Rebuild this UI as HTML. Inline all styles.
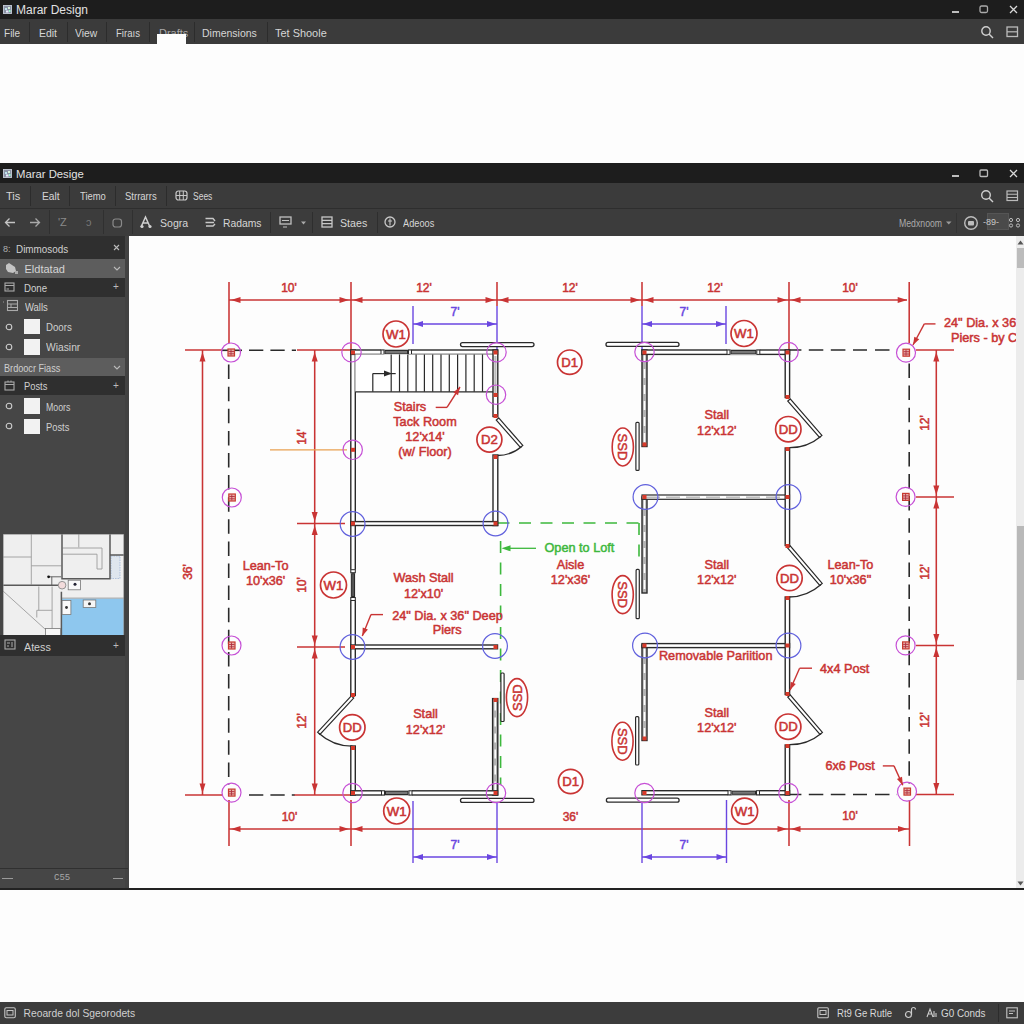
<!DOCTYPE html>
<html><head><meta charset="utf-8">
<style>
*{margin:0;padding:0;box-sizing:border-box}
html,body{width:1024px;height:1024px;overflow:hidden;background:#fdfdfd;font-family:"Liberation Sans",sans-serif}
.a{position:absolute}
.t{position:absolute;white-space:nowrap;color:#d6d6d6;font-size:11px;line-height:1}
.title{background:#1d1d1d}
.menu{background:#3b3b3b}
.tool{background:#3c3c3c}
.sep{position:absolute;width:1px;background:#2c2c2c}
.panel{background:#464646}
.drow{background:#2f2f2f}
.hrow{background:#5d5d5d}
</style></head><body>
<div class="a" style="left:0;top:1002px;width:1024px;height:22px;background:#3c3c3c"></div>
<!-- ===== top window ===== -->
<div class="a title" style="left:0;top:0;width:1024px;height:19px"></div>
<div class="a menu" style="left:0;top:19px;width:1024px;height:25px"></div>
<div class="a" style="left:0;top:44px;width:1024px;height:119px;background:#fdfdfd"></div>

<!-- title 1 -->
<svg class="a" style="left:3px;top:5px" width="9" height="9"><rect x="0" y="0" width="9" height="9" fill="#8b93a6"/><rect x="0.5" y="0.5" width="8" height="8" fill="none" stroke="#c8ccd6" stroke-width="0.8"/><rect x="2" y="3" width="2" height="2" fill="#bfe4ee"/><rect x="5" y="2" width="2" height="2" fill="#d8f0d8"/><rect x="3" y="5.5" width="2.5" height="2" fill="#eef"/><rect x="6" y="5" width="1.5" height="2" fill="#9fc"/></svg>
<div class="t" style="left:16px;top:4px;font-size:12px;color:#e2e2e2">Marar Design</div>
<div class="a" style="left:952px;top:11px;width:7px;height:2px;background:#bdbdbd"></div>
<svg class="a" style="left:979px;top:5px" width="10" height="9"><rect x="1" y="1" width="7.5" height="6.5" rx="1.5" fill="none" stroke="#aaa" stroke-width="1.3"/></svg>
<svg class="a" style="left:1009px;top:5px" width="9" height="9"><path d="M1 1L8 8M8 1L1 8" stroke="#d8d8d8" stroke-width="1.3"/></svg>
<!-- menu 1 -->
<div class="t" style="left:4px;top:27.8px;font-size:11px;transform:scaleX(0.913);transform-origin:0 0">File</div>
<div class="t" style="left:39px;top:27.8px;font-size:11px;transform:scaleX(0.949);transform-origin:0 0">Edit</div>
<div class="t" style="left:75px;top:27.8px;font-size:11px;transform:scaleX(0.938);transform-origin:0 0">View</div>
<div class="t" style="left:116px;top:27.8px;font-size:11px;transform:scaleX(0.873);transform-origin:0 0">Firaıs</div>
<div class="t" style="left:159px;top:27.8px;font-size:11px;color:#aaa">Drafts</div>
<div class="a" style="left:157px;top:34px;width:29px;height:10px;background:#fdfdfd"></div>
<div class="t" style="left:202px;top:27.8px;font-size:10.5px">Dimensions</div>
<div class="t" style="left:275px;top:27.8px;font-size:11px;transform:scaleX(0.995);transform-origin:0 0">Tet Shoole</div>
<div class="sep" style="left:29px;top:22px;height:20px"></div>
<div class="sep" style="left:67px;top:22px;height:20px"></div>
<div class="sep" style="left:106px;top:22px;height:20px"></div>
<div class="sep" style="left:149px;top:22px;height:20px"></div>
<div class="sep" style="left:194px;top:22px;height:20px"></div>
<div class="sep" style="left:267px;top:22px;height:20px"></div>
<svg class="a" style="left:980px;top:25px" width="14" height="14"><circle cx="6" cy="6" r="4.2" fill="none" stroke="#cfcfcf" stroke-width="1.4"/><path d="M9 9L13 13" stroke="#cfcfcf" stroke-width="1.5"/></svg>
<svg class="a" style="left:1006px;top:26px" width="13" height="12"><rect x="1" y="1" width="10.5" height="9.5" fill="none" stroke="#bbb" stroke-width="1.3"/><path d="M1 5.8H11.5" stroke="#bbb" stroke-width="1.2"/></svg>


<!-- ===== second window ===== -->
<div class="a title" style="left:0;top:163px;width:1024px;height:20px"></div>
<div class="a menu" style="left:0;top:183px;width:1024px;height:25px"></div>
<div class="a" style="left:0;top:208px;width:1024px;height:1px;background:#2e2e2e"></div>
<div class="a tool" style="left:0;top:209px;width:1024px;height:27px"></div>
<!-- title 2 -->
<svg class="a" style="left:3px;top:169px" width="9" height="9"><rect x="0" y="0" width="9" height="9" fill="#8b93a6"/><rect x="0.5" y="0.5" width="8" height="8" fill="none" stroke="#c8ccd6" stroke-width="0.8"/><rect x="2" y="3" width="2" height="2" fill="#bfe4ee"/><rect x="5" y="2" width="2" height="2" fill="#d8f0d8"/><rect x="3" y="5.5" width="2.5" height="2" fill="#eef"/><rect x="6" y="5" width="1.5" height="2" fill="#9fc"/></svg>
<div class="t" style="left:16px;top:168.5px;font-size:11.3px;color:#e2e2e2">Marar Desige</div>
<div class="a" style="left:952px;top:175px;width:7px;height:1.6px;background:#bdbdbd"></div>
<svg class="a" style="left:979px;top:169px" width="10" height="9"><rect x="1" y="1" width="7.5" height="6.5" rx="1" fill="none" stroke="#bbb" stroke-width="1.3"/></svg>
<svg class="a" style="left:1009px;top:169px" width="9" height="9"><path d="M1 1L8 8M8 1L1 8" stroke="#d8d8d8" stroke-width="1.3"/></svg>
<!-- menu 2 -->
<div class="t" style="left:6px;top:191px;font-size:11px">Tis</div>
<div class="t" style="left:41.5px;top:191px;font-size:11px;transform:scaleX(0.928);transform-origin:0 0">Ealt</div>
<div class="t" style="left:79.5px;top:191px;font-size:11px;transform:scaleX(0.856);transform-origin:0 0">Tiemo</div>
<div class="t" style="left:124.5px;top:191px;font-size:11px;transform:scaleX(0.864);transform-origin:0 0">Strrarrs</div>
<svg class="a" style="left:175px;top:190px" width="13" height="11"><rect x="1" y="1" width="11" height="9" rx="2.5" fill="none" stroke="#c8c8c8" stroke-width="1.2"/><path d="M4.7 1V10M8.3 1V10M1 5.5H12" stroke="#c8c8c8" stroke-width="1"/></svg>
<div class="t" style="left:192.5px;top:191.5px;font-size:10px;transform:scaleX(0.85);transform-origin:0 0">Sees</div>
<div class="sep" style="left:30px;top:186px;height:20px"></div>
<div class="sep" style="left:69px;top:186px;height:20px"></div>
<div class="sep" style="left:115px;top:186px;height:20px"></div>
<div class="sep" style="left:166px;top:186px;height:20px"></div>
<svg class="a" style="left:980px;top:189px" width="14" height="14"><circle cx="6" cy="6" r="4.3" fill="none" stroke="#cfcfcf" stroke-width="1.4"/><path d="M9 9L13 13" stroke="#cfcfcf" stroke-width="1.5"/></svg>
<svg class="a" style="left:1006px;top:190px" width="13" height="12"><rect x="1" y="1" width="10.5" height="9.5" fill="none" stroke="#bbb" stroke-width="1.2"/><path d="M1 4.3H11.5M1 7.5H11.5" stroke="#bbb" stroke-width="1.1"/></svg>
<!-- toolbar -->
<svg class="a" style="left:4px;top:217px" width="12" height="11"><path d="M11 5.5H1.5M5.5 1.5L1.5 5.5L5.5 9.5" fill="none" stroke="#c4c4c4" stroke-width="1.3"/></svg>
<svg class="a" style="left:29px;top:217px" width="12" height="11"><path d="M1 5.5H10.5M6.5 1.5L10.5 5.5L6.5 9.5" fill="none" stroke="#a8a8a8" stroke-width="1.3"/></svg>
<div class="sep" style="left:49px;top:210px;height:24px;background:#303030"></div>
<div class="t" style="left:58px;top:217px;font-size:11px;color:#8a8a8a">'Z</div>
<div class="t" style="left:86px;top:217px;font-size:11px;color:#7a7a7a">ɔ</div>
<div class="sep" style="left:103px;top:210px;height:24px;background:#303030"></div>
<svg class="a" style="left:112px;top:218px" width="11" height="10"><rect x="1" y="1" width="8.5" height="8" rx="2.5" fill="none" stroke="#8a8a8a" stroke-width="1.2"/></svg>
<div class="sep" style="left:132px;top:210px;height:24px;background:#303030"></div>
<svg class="a" style="left:139px;top:215px" width="14" height="14"><path d="M2 12L6.5 2L11 12M4 8H9" fill="none" stroke="#d0d0d0" stroke-width="1.5"/><circle cx="3" cy="11.5" r="1.6" fill="#d0d0d0"/><circle cx="11" cy="11.5" r="1.6" fill="#d0d0d0"/></svg>
<div class="t" style="left:159.5px;top:218px;font-size:11px;transform:scaleX(0.957);transform-origin:0 0">Sogra</div>
<svg class="a" style="left:204px;top:216px" width="13" height="13"><path d="M1.5 2.5H9L11 5M1.5 6.5H10M2 10H9L11 8" fill="none" stroke="#c8c8c8" stroke-width="1.4"/></svg>
<div class="t" style="left:222.5px;top:218px;font-size:11px;transform:scaleX(0.94);transform-origin:0 0">Radams</div>
<div class="sep" style="left:270px;top:212px;height:21px;background:#2e2e2e"></div>
<svg class="a" style="left:279px;top:216px" width="13" height="12"><rect x="1" y="1" width="11" height="7" fill="none" stroke="#c0c0c0" stroke-width="1.3"/><path d="M3 4.5H10M4 11H8" stroke="#c0c0c0" stroke-width="1.2"/></svg>
<svg class="a" style="left:301px;top:221px" width="5" height="4"><path d="M0 0.5H5L2.5 3.5Z" fill="#aaa"/></svg>
<div class="sep" style="left:312px;top:212px;height:21px;background:#2e2e2e"></div>
<svg class="a" style="left:321px;top:216px" width="12" height="12"><rect x="1" y="1" width="10" height="10" fill="none" stroke="#c8c8c8" stroke-width="1.3"/><path d="M1 4.3H11M1 7.6H11" stroke="#c8c8c8" stroke-width="1.2"/></svg>
<div class="t" style="left:339.5px;top:218px;font-size:11px;transform:scaleX(0.967);transform-origin:0 0">Staes</div>
<div class="sep" style="left:377px;top:212px;height:21px;background:#2e2e2e"></div>
<svg class="a" style="left:384px;top:216px" width="12" height="12"><circle cx="6" cy="6" r="5" fill="none" stroke="#c8c8c8" stroke-width="1.3"/><path d="M6 2.5V9.5M4 5H8" stroke="#c8c8c8" stroke-width="1.1"/></svg>
<div class="t" style="left:402.5px;top:218px;font-size:11px;transform:scaleX(0.838);transform-origin:0 0">Adeoos</div>
<div class="t" style="left:899px;top:218px;font-size:10.5px;color:#aaa;transform:scaleX(0.83);transform-origin:0 0">Medxnoom</div>
<svg class="a" style="left:946px;top:221px" width="6" height="4"><path d="M0 0.5H5.5L2.75 3.5Z" fill="#9a9a9a"/></svg>
<div class="sep" style="left:956px;top:213px;height:20px;background:#333"></div>
<svg class="a" style="left:963px;top:215px" width="16" height="16"><circle cx="8" cy="8" r="6.3" fill="none" stroke="#bdbdbd" stroke-width="1.4"/><rect x="5" y="6" width="6" height="4.5" rx="1" fill="#bdbdbd"/></svg>
<div class="a" style="left:987px;top:213px;width:22px;height:17px;background:#4a4a4a;border:1px solid #555"></div>
<div class="t" style="left:983px;top:218px;font-size:9px;color:#c8c8c8">-89-</div>
<svg class="a" style="left:1008px;top:217px" width="16" height="11"><circle cx="3" cy="3" r="1.6" fill="none" stroke="#bbb"/><circle cx="10" cy="3" r="1.6" fill="none" stroke="#bbb"/><circle cx="3" cy="8.5" r="1.6" fill="none" stroke="#bbb"/><circle cx="10" cy="8.5" r="1.6" fill="none" stroke="#bbb"/></svg>


<!-- left panel -->
<div class="a panel" style="left:0;top:236px;width:129px;height:653px"></div>
<div class="a" style="left:125px;top:236px;width:4px;height:653px;background:#424242"></div>


<!-- panel rows -->
<div class="a drow" style="left:0;top:236px;width:125px;height:23px"></div>
<div class="t" style="left:3px;top:245px;font-size:9px;color:#b0b0b0">8:</div>
<div class="t" style="left:16px;top:243.5px;font-size:11px;color:#cfcfcf;transform:scaleX(0.897);transform-origin:0 0">Dimmosods</div>
<svg class="a" style="left:113px;top:244px" width="7" height="7"><path d="M1 1L6 6M6 1L1 6" stroke="#bbb" stroke-width="1.1"/></svg>
<div class="a hrow" style="left:0;top:259px;width:125px;height:19px"></div>
<svg class="a" style="left:5px;top:262px" width="14" height="13"><path d="M1 3L4 1L7 3L10 5L11 9L8 11L3 10L1 7Z" fill="#c4c4c4"/><rect x="10" y="9" width="3" height="3" fill="#aaa"/></svg>
<div class="t" style="left:24.5px;top:264px;font-size:11px;color:#d4d4d4">Eldtatad</div>
<svg class="a" style="left:113px;top:266px" width="8" height="5"><path d="M1 1L4 4L7 1" fill="none" stroke="#bbb" stroke-width="1.1"/></svg>
<div class="a drow" style="left:0;top:278px;width:125px;height:19px"></div>
<svg class="a" style="left:4px;top:282px" width="11" height="10"><rect x="1" y="1" width="9" height="8" fill="none" stroke="#aaa" stroke-width="1.1"/><path d="M1 3.5H10M2.5 7H5" stroke="#aaa"/></svg>
<div class="t" style="left:24px;top:283px;font-size:11px;color:#cfcfcf;transform:scaleX(0.878);transform-origin:0 0">Done</div>
<div class="t" style="left:113px;top:282px;font-size:10px;color:#bbb">+</div>
<svg class="a" style="left:2px;top:299px" width="16" height="14"><path d="M1 3H2" stroke="#999"/><rect x="5.5" y="1.5" width="10" height="10" fill="none" stroke="#aaa" stroke-width="1.1"/><path d="M5.5 5H15.5M5.5 8.5H15.5M9 5V8.5" stroke="#aaa"/></svg>
<div class="t" style="left:24.5px;top:302px;font-size:11px;color:#d4d4d4;transform:scaleX(0.861);transform-origin:0 0">Walls</div>
<svg class="a" style="left:5px;top:323px" width="8" height="8"><circle cx="4" cy="4" r="2.8" fill="none" stroke="#ccc" stroke-width="1.1"/></svg>
<div class="a" style="left:24px;top:319px;width:16px;height:15px;background:#f2f2f2"></div>
<div class="t" style="left:45.5px;top:322px;font-size:11px;color:#cfcfcf;transform:scaleX(0.876);transform-origin:0 0">Doors</div>
<svg class="a" style="left:5px;top:343px" width="8" height="8"><circle cx="4" cy="4" r="2.8" fill="none" stroke="#ccc" stroke-width="1.1"/></svg>
<div class="a" style="left:24px;top:339px;width:16px;height:15.5px;background:#f2f2f2"></div>
<div class="t" style="left:45.5px;top:342px;font-size:11px;color:#cfcfcf;transform:scaleX(0.935);transform-origin:0 0">Wiasinr</div>
<div class="a hrow" style="left:0;top:357.5px;width:125px;height:18.5px"></div>
<div class="t" style="left:3.7px;top:362.5px;font-size:11px;color:#cfcfcf;transform:scaleX(0.83);transform-origin:0 0">Brdoocr Fiass</div>
<svg class="a" style="left:113px;top:365px" width="8" height="5"><path d="M1 1L4 4L7 1" fill="none" stroke="#bbb" stroke-width="1.1"/></svg>
<div class="a drow" style="left:0;top:376px;width:125px;height:18.5px"></div>
<svg class="a" style="left:4px;top:380px" width="11" height="11"><rect x="1" y="2" width="9" height="8" fill="none" stroke="#aaa" stroke-width="1.1"/><path d="M1 4.5H10M4 0.5V2M7 0.5V2" stroke="#aaa"/></svg>
<div class="t" style="left:23.5px;top:381px;font-size:11px;color:#cfcfcf;transform:scaleX(0.85);transform-origin:0 0">Posts</div>
<div class="t" style="left:113px;top:380.5px;font-size:10px;color:#bbb">+</div>
<svg class="a" style="left:5px;top:402px" width="8" height="8"><circle cx="4" cy="4" r="2.8" fill="none" stroke="#ccc" stroke-width="1.1"/></svg>
<div class="a" style="left:24px;top:398px;width:16px;height:16px;background:#f2f2f2"></div>
<div class="t" style="left:45.5px;top:401.5px;font-size:11px;color:#cfcfcf;transform:scaleX(0.798);transform-origin:0 0">Moors</div>
<svg class="a" style="left:5px;top:422px" width="8" height="8"><circle cx="4" cy="4" r="2.8" fill="none" stroke="#ccc" stroke-width="1.1"/></svg>
<div class="a" style="left:24px;top:418.5px;width:16px;height:15.5px;background:#f2f2f2"></div>
<div class="t" style="left:45.5px;top:422px;font-size:11px;color:#cfcfcf;transform:scaleX(0.85);transform-origin:0 0">Posts</div>
<!-- minimap -->
<svg class="a" style="left:2.5px;top:533.5px" width="121" height="102" viewBox="0 0 121 102">
<rect x="0" y="0" width="121" height="102" fill="#efefef"/>
<rect x="58.5" y="64.5" width="62.5" height="37.5" fill="#8ec7ee"/>
<rect x="108" y="22" width="9" height="22.5" fill="#dfe6ee" stroke="#8aa6d0" stroke-width="0.6" stroke-dasharray="1.5 1"/>
<g fill="none" stroke="#9c9c9c" stroke-width="0.9">
<path d="M28.3 0V50.5M0 23H28.3M28.3 31.8H58.5"/>
<path d="M75.8 0V13.4M59.5 14H99V35H94V20.2H59.5"/>
<path d="M0 57L42.5 95.5M35.8 52.5V76.3M33.8 76.3H49.1M49.1 52.5V94.5M33.8 76.3V83.5M58.5 64.1H121"/>
</g>
<g fill="none" stroke="#5a5a5a" stroke-width="1.5">
<path d="M59 0V44.8H107V0M107 21H121M0 51.3H55M58.4 57.8V102"/>
</g>
<path d="M45.6 42.8H58M48.8 42.8V51" stroke="#555" stroke-width="0.9"/><circle cx="45.6" cy="42.8" r="1.4" fill="#111"/>
<circle cx="59.1" cy="51.2" r="3.8" fill="#f3dcdc" stroke="#8a8a8a" stroke-width="0.9"/>
<rect x="65.2" y="46.2" width="12.3" height="9.6" fill="#fafafa" stroke="#777" stroke-width="0.8"/><circle cx="72" cy="50.3" r="1.5" fill="#223"/>
<rect x="80.2" y="66" width="12.6" height="7.5" fill="#f6f6f6" stroke="#777" stroke-width="0.8"/><circle cx="86.5" cy="69.8" r="1.5" fill="#333"/>
<rect x="59.1" y="66.5" width="8.8" height="14" fill="#fafafa" stroke="#777" stroke-width="0.8"/><circle cx="63.5" cy="73.5" r="1.4" fill="#333"/>
<rect x="42.5" y="94.5" width="15" height="7" fill="#f6f6f6" stroke="#777" stroke-width="0.8"/>
<rect x="0.3" y="0.3" width="120.4" height="101.4" fill="none" stroke="#8a8a8a" stroke-width="0.6"/>
</svg>
<div class="a drow" style="left:0;top:635px;width:125px;height:21px"></div>
<svg class="a" style="left:4px;top:639px" width="12" height="12"><rect x="1" y="1" width="10" height="9" fill="none" stroke="#aaa" stroke-width="1.1"/><path d="M3 4H6M3 7H5M8 3V8" stroke="#aaa"/></svg>
<div class="t" style="left:23.5px;top:642px;font-size:11px;color:#d0d0d0;transform:scaleX(0.974);transform-origin:0 0">Atess</div>
<div class="t" style="left:113px;top:641px;font-size:10px;color:#bbb">+</div>
<div class="a" style="left:0;top:867.5px;width:128px;height:1.2px;background:#303030"></div>
<div class="a" style="left:2px;top:878px;width:11px;height:1px;background:#9a9a9a"></div>
<div class="a" style="left:113px;top:878px;width:10px;height:1px;background:#9a9a9a"></div>
<div class="t" style="left:54px;top:874px;font-size:9px;color:#a8a8a8;font-family:'Liberation Mono',monospace">C55</div>
<!-- status -->
<svg class="a" style="left:4px;top:1007px" width="12" height="12"><rect x="0.8" y="0.8" width="10.5" height="10" rx="1.5" fill="none" stroke="#c4c4c4" stroke-width="1.1"/><rect x="3" y="3.5" width="6" height="4.5" fill="none" stroke="#c4c4c4"/></svg>
<div class="t" style="left:23.5px;top:1008.5px;font-size:10.3px;color:#d0d0d0">Reoarde dol Sgeorodets</div>
<svg class="a" style="left:817px;top:1007px" width="12" height="12"><rect x="0.8" y="0.8" width="10.5" height="10" rx="1" fill="none" stroke="#c4c4c4" stroke-width="1.1"/><rect x="3" y="3.5" width="6" height="4" fill="none" stroke="#c4c4c4"/></svg>
<div class="t" style="left:837px;top:1008px;font-size:10.5px;color:#d8d8d8;transform:scaleX(0.908);transform-origin:0 0">Rt9 Ge Rutle</div>
<svg class="a" style="left:904px;top:1006px" width="13" height="13"><circle cx="4.5" cy="8.5" r="3" fill="none" stroke="#ccc" stroke-width="1.2"/><path d="M7.5 8.5V3.5A2 2 0 0 1 11.5 3.5" fill="none" stroke="#ccc" stroke-width="1.2"/></svg>
<svg class="a" style="left:926px;top:1007px" width="12" height="12"><path d="M1 10L4 2L7 10M2.5 7H6M8 4V10M10 6V10" fill="none" stroke="#ccc" stroke-width="1.1"/></svg>
<div class="t" style="left:941px;top:1008px;font-size:10.5px;color:#d8d8d8;transform:scaleX(0.942);transform-origin:0 0">G0 Conds</div>
<div class="a" style="left:998px;top:1004px;width:1px;height:18px;background:#2c2c2c"></div>
<svg class="a" style="left:1006px;top:1007px" width="12" height="12"><rect x="0.8" y="0.8" width="10.5" height="10" fill="none" stroke="#c4c4c4" stroke-width="1.1"/><path d="M3 4H9M3 6.5H7" stroke="#c4c4c4"/></svg>

<!-- canvas -->
<div class="a" style="left:129px;top:236px;width:887px;height:652px;background:#fdfdfd;overflow:hidden">
<svg style="position:absolute;left:-129px;top:-236px" width="1024" height="1024" font-family="Liberation Sans, sans-serif">
<line x1="229" y1="282" x2="229" y2="343" stroke="#c93434" stroke-width="1.55"/>
<line x1="351" y1="282" x2="351" y2="350" stroke="#c93434" stroke-width="1.55"/>
<line x1="497" y1="282" x2="497" y2="306" stroke="#c93434" stroke-width="1.55"/>
<line x1="642" y1="282" x2="642" y2="306" stroke="#c93434" stroke-width="1.55"/>
<line x1="789" y1="282" x2="789" y2="350" stroke="#c93434" stroke-width="1.55"/>
<line x1="909.2" y1="282" x2="909.2" y2="343" stroke="#c93434" stroke-width="1.55"/>
<line x1="497" y1="306" x2="497" y2="350" stroke="#6a46e0" stroke-width="1.4"/>
<line x1="642" y1="306" x2="642" y2="350" stroke="#6a46e0" stroke-width="1.4"/>
<line x1="229" y1="300" x2="907" y2="300" stroke="#c93434" stroke-width="1.55"/>
<polygon points="231,300 240.5,297 240.5,303" fill="#c93434"/>
<polygon points="349,300 339.5,297 339.5,303" fill="#c93434"/>
<polygon points="353,300 362.5,297 362.5,303" fill="#c93434"/>
<polygon points="495,300 485.5,297 485.5,303" fill="#c93434"/>
<polygon points="499,300 508.5,297 508.5,303" fill="#c93434"/>
<polygon points="640,300 630.5,297 630.5,303" fill="#c93434"/>
<polygon points="644,300 653.5,297 653.5,303" fill="#c93434"/>
<polygon points="787,300 777.5,297 777.5,303" fill="#c93434"/>
<polygon points="791,300 800.5,297 800.5,303" fill="#c93434"/>
<polygon points="907.2,300 897.7,297 897.7,303" fill="#c93434"/>
<text x="289" y="291.5" fill="#c93434" stroke="#c93434" stroke-width="0.5" font-size="12" text-anchor="middle">10'</text>
<text x="424" y="291.5" fill="#c93434" stroke="#c93434" stroke-width="0.5" font-size="12" text-anchor="middle">12'</text>
<text x="570" y="291.5" fill="#c93434" stroke="#c93434" stroke-width="0.5" font-size="12" text-anchor="middle">12'</text>
<text x="715" y="291.5" fill="#c93434" stroke="#c93434" stroke-width="0.5" font-size="12" text-anchor="middle">12'</text>
<text x="850" y="291.5" fill="#c93434" stroke="#c93434" stroke-width="0.5" font-size="12" text-anchor="middle">10'</text>
<line x1="413" y1="306" x2="413" y2="344" stroke="#6a46e0" stroke-width="1.4"/>
<line x1="726" y1="306" x2="726" y2="344" stroke="#6a46e0" stroke-width="1.4"/>
<line x1="413" y1="324" x2="497" y2="324" stroke="#6a46e0" stroke-width="1.4"/>
<polygon points="414,324 423,321 423,327" fill="#6a46e0"/>
<polygon points="496,324 487,321 487,327" fill="#6a46e0"/>
<line x1="642" y1="324" x2="726" y2="324" stroke="#6a46e0" stroke-width="1.4"/>
<polygon points="643,324 652,321 652,327" fill="#6a46e0"/>
<polygon points="725,324 716,321 716,327" fill="#6a46e0"/>
<text x="455" y="315.5" fill="#6a46e0" stroke="#6a46e0" stroke-width="0.5" font-size="12" text-anchor="middle">7'</text>
<text x="684" y="315.5" fill="#6a46e0" stroke="#6a46e0" stroke-width="0.5" font-size="12" text-anchor="middle">7'</text>
<line x1="229" y1="800" x2="229" y2="846" stroke="#c93434" stroke-width="1.55"/>
<line x1="351" y1="800" x2="351" y2="846" stroke="#c93434" stroke-width="1.55"/>
<line x1="789" y1="800" x2="789" y2="846" stroke="#c93434" stroke-width="1.55"/>
<line x1="909.5" y1="800" x2="909.5" y2="846" stroke="#c93434" stroke-width="1.55"/>
<line x1="229" y1="829" x2="909.5" y2="829" stroke="#c93434" stroke-width="1.55"/>
<polygon points="231,829 240.5,826 240.5,832" fill="#c93434"/>
<polygon points="349,829 339.5,826 339.5,832" fill="#c93434"/>
<polygon points="353,829 362.5,826 362.5,832" fill="#c93434"/>
<polygon points="787,829 777.5,826 777.5,832" fill="#c93434"/>
<polygon points="791,829 800.5,826 800.5,832" fill="#c93434"/>
<polygon points="907.5,829 898.0,826 898.0,832" fill="#c93434"/>
<text x="289.5" y="820.5" fill="#c93434" stroke="#c93434" stroke-width="0.5" font-size="12" text-anchor="middle">10'</text>
<text x="570.5" y="820.5" fill="#c93434" stroke="#c93434" stroke-width="0.5" font-size="12" text-anchor="middle">36'</text>
<text x="850" y="819.5" fill="#c93434" stroke="#c93434" stroke-width="0.5" font-size="12" text-anchor="middle">10'</text>
<line x1="413" y1="801" x2="413" y2="863" stroke="#6a46e0" stroke-width="1.4"/>
<line x1="497" y1="800" x2="497" y2="863" stroke="#6a46e0" stroke-width="1.4"/>
<line x1="413" y1="857" x2="497" y2="857" stroke="#6a46e0" stroke-width="1.4"/>
<polygon points="414,857 423,854 423,860" fill="#6a46e0"/>
<polygon points="496,857 487,854 487,860" fill="#6a46e0"/>
<line x1="642" y1="800" x2="642" y2="863" stroke="#6a46e0" stroke-width="1.4"/>
<line x1="726.5" y1="800" x2="726.5" y2="863" stroke="#6a46e0" stroke-width="1.4"/>
<line x1="642" y1="857" x2="726.5" y2="857" stroke="#6a46e0" stroke-width="1.4"/>
<polygon points="643,857 652,854 652,860" fill="#6a46e0"/>
<polygon points="725.5,857 716.5,854 716.5,860" fill="#6a46e0"/>
<text x="455" y="849" fill="#6a46e0" stroke="#6a46e0" stroke-width="0.5" font-size="12" text-anchor="middle">7'</text>
<text x="684" y="849" fill="#6a46e0" stroke="#6a46e0" stroke-width="0.5" font-size="12" text-anchor="middle">7'</text>
<line x1="185" y1="350" x2="222" y2="350" stroke="#c93434" stroke-width="1.55"/>
<line x1="297" y1="350" x2="351" y2="350" stroke="#c93434" stroke-width="1.55"/>
<line x1="185" y1="795" x2="222" y2="795" stroke="#c93434" stroke-width="1.55"/>
<line x1="294" y1="795" x2="351" y2="795" stroke="#c93434" stroke-width="1.55"/>
<line x1="202.5" y1="350" x2="202.5" y2="795" stroke="#c93434" stroke-width="1.55"/>
<polygon points="202.5,352 199.5,361.5 205.5,361.5" fill="#c93434"/>
<polygon points="202.5,793 199.5,783.5 205.5,783.5" fill="#c93434"/>
<text x="189" y="572" fill="#c93434" stroke="#c93434" stroke-width="0.5" font-size="12" text-anchor="middle" transform="rotate(-90 189 572)" dominant-baseline="middle">36'</text>
<line x1="297" y1="523.5" x2="345" y2="523.5" stroke="#c93434" stroke-width="1.55"/>
<line x1="297" y1="647" x2="345" y2="647" stroke="#c93434" stroke-width="1.55"/>
<line x1="314.7" y1="350" x2="314.7" y2="795" stroke="#c93434" stroke-width="1.55"/>
<polygon points="314.7,352 311.7,361.5 317.7,361.5" fill="#c93434"/>
<polygon points="314.7,521.5 311.7,512.0 317.7,512.0" fill="#c93434"/>
<polygon points="314.7,525.5 311.7,535.0 317.7,535.0" fill="#c93434"/>
<polygon points="314.7,645 311.7,635.5 317.7,635.5" fill="#c93434"/>
<polygon points="314.7,649 311.7,658.5 317.7,658.5" fill="#c93434"/>
<polygon points="314.7,793 311.7,783.5 317.7,783.5" fill="#c93434"/>
<text x="303" y="437" fill="#c93434" stroke="#c93434" stroke-width="0.5" font-size="12" text-anchor="middle" transform="rotate(-90 303 437)" dominant-baseline="middle">14'</text>
<text x="303" y="585" fill="#c93434" stroke="#c93434" stroke-width="0.5" font-size="12" text-anchor="middle" transform="rotate(-90 303 585)" dominant-baseline="middle">10'</text>
<text x="303" y="721" fill="#c93434" stroke="#c93434" stroke-width="0.5" font-size="12" text-anchor="middle" transform="rotate(-90 303 721)" dominant-baseline="middle">12'</text>
<line x1="270" y1="449.8" x2="347" y2="449.8" stroke="#e8a050" stroke-width="1.3"/>
<line x1="916" y1="350" x2="954" y2="350" stroke="#c93434" stroke-width="1.55"/>
<line x1="916" y1="497" x2="954" y2="497" stroke="#c93434" stroke-width="1.55"/>
<line x1="916" y1="645.5" x2="954" y2="645.5" stroke="#c93434" stroke-width="1.55"/>
<line x1="916" y1="794.5" x2="954" y2="794.5" stroke="#c93434" stroke-width="1.55"/>
<line x1="936.3" y1="350" x2="936.3" y2="794.5" stroke="#c93434" stroke-width="1.55"/>
<polygon points="936.3,352 933.3,361.5 939.3,361.5" fill="#c93434"/>
<polygon points="936.3,495 933.3,485.5 939.3,485.5" fill="#c93434"/>
<polygon points="936.3,499 933.3,508.5 939.3,508.5" fill="#c93434"/>
<polygon points="936.3,643.5 933.3,634.0 939.3,634.0" fill="#c93434"/>
<polygon points="936.3,647.5 933.3,657.0 939.3,657.0" fill="#c93434"/>
<polygon points="936.3,792.5 933.3,783.0 939.3,783.0" fill="#c93434"/>
<text x="925.5" y="423" fill="#c93434" stroke="#c93434" stroke-width="0.5" font-size="12" text-anchor="middle" transform="rotate(-90 925.5 423)" dominant-baseline="middle">12'</text>
<text x="925.5" y="572" fill="#c93434" stroke="#c93434" stroke-width="0.5" font-size="12" text-anchor="middle" transform="rotate(-90 925.5 572)" dominant-baseline="middle">12'</text>
<text x="925.5" y="720" fill="#c93434" stroke="#c93434" stroke-width="0.5" font-size="12" text-anchor="middle" transform="rotate(-90 925.5 720)" dominant-baseline="middle">12'</text>
<line x1="228.7" y1="364.6" x2="228.7" y2="785" stroke="#2a2a2a" stroke-width="1.6" stroke-dasharray="14.5 7.6"/>
<line x1="249" y1="350.3" x2="296" y2="350.3" stroke="#2a2a2a" stroke-width="1.6" stroke-dasharray="14.3 7.1"/>
<line x1="249" y1="795" x2="294.5" y2="795" stroke="#2a2a2a" stroke-width="1.6" stroke-dasharray="14.3 7.1"/>
<line x1="909.2" y1="363.5" x2="909.2" y2="784" stroke="#2a2a2a" stroke-width="1.6" stroke-dasharray="14.5 7.6"/>
<line x1="790" y1="350" x2="896" y2="350" stroke="#2a2a2a" stroke-width="1.6" stroke-dasharray="11.4 7.4 14.5 7.5 14.6 7.6 14 8 14.5 7.3"/>
<line x1="790" y1="794.5" x2="897" y2="794.5" stroke="#2a2a2a" stroke-width="1.6" stroke-dasharray="11.4 7.4 14.5 7.5 14.6 7.6 14 8 14.5 7.3"/>
<line x1="222" y1="350.3" x2="242" y2="350.3" stroke="#2a2a2a" stroke-width="1.6"/>
<circle cx="231" cy="352.5" r="9.5" fill="none" stroke="#c650d6" stroke-width="1.2"/>
<rect x="228" y="349.0" width="6.5" height="7" fill="#e8b0a8" stroke="#c83a30" stroke-width="1.2"/>
<path d="M228.5 351.5H234M228.5 353.8H234M231 349.5V355.5" stroke="#b03040" stroke-width="0.9"/>
<circle cx="231.8" cy="497.5" r="9.5" fill="none" stroke="#c650d6" stroke-width="1.2"/>
<rect x="228.8" y="494.0" width="6.5" height="7" fill="#e8b0a8" stroke="#c83a30" stroke-width="1.2"/>
<path d="M229.3 496.5H234.8M229.3 498.8H234.8M231.8 494.5V500.5" stroke="#b03040" stroke-width="0.9"/>
<circle cx="231.5" cy="645.5" r="9.5" fill="none" stroke="#c650d6" stroke-width="1.2"/>
<rect x="228.5" y="642.0" width="6.5" height="7" fill="#e8b0a8" stroke="#c83a30" stroke-width="1.2"/>
<path d="M229.0 644.5H234.5M229.0 646.8H234.5M231.5 642.5V648.5" stroke="#b03040" stroke-width="0.9"/>
<circle cx="231.5" cy="792.6" r="9.5" fill="none" stroke="#c650d6" stroke-width="1.2"/>
<rect x="228.5" y="789.1" width="6.5" height="7" fill="#e8b0a8" stroke="#c83a30" stroke-width="1.2"/>
<path d="M229.0 791.6H234.5M229.0 793.9H234.5M231.5 789.6V795.6" stroke="#b03040" stroke-width="0.9"/>
<circle cx="906" cy="352.7" r="9.5" fill="none" stroke="#c650d6" stroke-width="1.2"/>
<rect x="903" y="349.2" width="6.5" height="7" fill="#e8b0a8" stroke="#c83a30" stroke-width="1.2"/>
<path d="M903.5 351.7H909M903.5 354.0H909M906 349.7V355.7" stroke="#b03040" stroke-width="0.9"/>
<circle cx="905.6" cy="496.9" r="9.5" fill="none" stroke="#c650d6" stroke-width="1.2"/>
<rect x="902.6" y="493.4" width="6.5" height="7" fill="#e8b0a8" stroke="#c83a30" stroke-width="1.2"/>
<path d="M903.1 495.9H908.6M903.1 498.2H908.6M905.6 493.9V499.9" stroke="#b03040" stroke-width="0.9"/>
<circle cx="905.6" cy="645.4" r="9.5" fill="none" stroke="#c650d6" stroke-width="1.2"/>
<rect x="902.6" y="641.9" width="6.5" height="7" fill="#e8b0a8" stroke="#c83a30" stroke-width="1.2"/>
<path d="M903.1 644.4H908.6M903.1 646.6999999999999H908.6M905.6 642.4V648.4" stroke="#b03040" stroke-width="0.9"/>
<circle cx="907" cy="791.6" r="9.5" fill="none" stroke="#c650d6" stroke-width="1.2"/>
<rect x="904" y="788.1" width="6.5" height="7" fill="#e8b0a8" stroke="#c83a30" stroke-width="1.2"/>
<path d="M904.5 790.6H910M904.5 792.9H910M907 788.6V794.6" stroke="#b03040" stroke-width="0.9"/>
<line x1="497.5" y1="523" x2="639" y2="523" stroke="#3db83d" stroke-width="1.6" stroke-dasharray="12 9.5"/>
<line x1="639" y1="523" x2="639" y2="562" stroke="#3db83d" stroke-width="1.6" stroke-dasharray="12 9.5"/>
<line x1="500.6" y1="541" x2="500.6" y2="785" stroke="#3db83d" stroke-width="1.6" stroke-dasharray="12 9.5"/>
<line x1="536" y1="548.3" x2="508" y2="548.3" stroke="#3db83d" stroke-width="1.3"/>
<polygon points="501.5,548.3 510.5,545.3 510.5,551.3" fill="#3db83d"/>
<text x="544.5" y="552" fill="#3db83d" stroke="#3db83d" stroke-width="0.5" font-size="12.7" text-anchor="start">Open to Loft</text>
<rect x="350.8" y="350" width="4.5" height="345.5" fill="#fff" stroke="#2a2a2a" stroke-width="1.4"/>
<rect x="350.8" y="746" width="4.5" height="49" fill="#fff" stroke="#2a2a2a" stroke-width="1.4"/>
<rect x="350.2" y="569.7" width="5.7" height="30.799999999999955" fill="#fff"/>
<rect x="350.8" y="569.7" width="4.5" height="3" fill="#fff" stroke="#2a2a2a" stroke-width="1"/>
<rect x="350.8" y="597.5" width="4.5" height="3" fill="#fff" stroke="#2a2a2a" stroke-width="1"/>
<rect x="351.6" y="573.7" width="2.9" height="22.799999999999955" fill="#555" stroke="#2a2a2a" stroke-width="1"/>
<rect x="350.8" y="350" width="146.7" height="4.399999999999977" fill="#fff" stroke="#2a2a2a" stroke-width="1.4"/>
<rect x="381" y="349.4" width="30.5" height="5.599999999999977" fill="#fff"/>
<rect x="381" y="350" width="3" height="4.399999999999977" fill="#fff" stroke="#2a2a2a" stroke-width="1"/>
<rect x="408.5" y="350" width="3" height="4.399999999999977" fill="#fff" stroke="#2a2a2a" stroke-width="1"/>
<rect x="385" y="350.5" width="22.5" height="3.3999999999999773" fill="#777" stroke="#2a2a2a" stroke-width="1"/>
<rect x="355.3" y="354.4" width="137.7" height="37.4" fill="#fff" stroke="none"/>
<line x1="355.3" y1="391.8" x2="493" y2="391.8" stroke="#2a2a2a" stroke-width="1.3"/>
<line x1="391.2" y1="354.4" x2="391.2" y2="391.8" stroke="#2a2a2a" stroke-width="1.2"/>
<line x1="399.5" y1="354.4" x2="399.5" y2="391.8" stroke="#2a2a2a" stroke-width="1.2"/>
<line x1="407.8" y1="354.4" x2="407.8" y2="391.8" stroke="#2a2a2a" stroke-width="1.2"/>
<line x1="416.09999999999997" y1="354.4" x2="416.09999999999997" y2="391.8" stroke="#2a2a2a" stroke-width="1.2"/>
<line x1="424.4" y1="354.4" x2="424.4" y2="391.8" stroke="#2a2a2a" stroke-width="1.2"/>
<line x1="432.7" y1="354.4" x2="432.7" y2="391.8" stroke="#2a2a2a" stroke-width="1.2"/>
<line x1="441.0" y1="354.4" x2="441.0" y2="391.8" stroke="#2a2a2a" stroke-width="1.2"/>
<line x1="449.3" y1="354.4" x2="449.3" y2="391.8" stroke="#2a2a2a" stroke-width="1.2"/>
<line x1="457.6" y1="354.4" x2="457.6" y2="391.8" stroke="#2a2a2a" stroke-width="1.2"/>
<line x1="465.9" y1="354.4" x2="465.9" y2="391.8" stroke="#2a2a2a" stroke-width="1.2"/>
<line x1="474.2" y1="354.4" x2="474.2" y2="391.8" stroke="#2a2a2a" stroke-width="1.2"/>
<line x1="482.5" y1="354.4" x2="482.5" y2="391.8" stroke="#2a2a2a" stroke-width="1.2"/>
<line x1="372.8" y1="391.8" x2="372.8" y2="373.6" stroke="#2a2a2a" stroke-width="1.2"/>
<line x1="372.8" y1="373.6" x2="395.7" y2="373.6" stroke="#2a2a2a" stroke-width="1.2"/>
<polygon points="392,373.6 384,370.6 384,376.6" fill="#2a2a2a"/>
<rect x="493" y="350" width="4.800000000000011" height="66.5" fill="#fff" stroke="#2a2a2a" stroke-width="1.4"/>
<rect x="494.3" y="356" width="2.2" height="37" fill="#bbb"/>
<rect x="493" y="455" width="4.800000000000011" height="70.5" fill="#fff" stroke="#2a2a2a" stroke-width="1.4"/>
<polygon points="496.29859746369016,420.0567080702579 520.3985974636902,447.4567080702579 522.8014025363099,445.34329192974207 498.70140253630984,417.9432919297421" fill="#fff" stroke="#2a2a2a" stroke-width="1.2"/>
<path d="M521.6 446.4A36.490683742566404 36.490683742566404 0 0 1 497.5 455.5" fill="none" stroke="#2a2a2a" stroke-width="1.3"/>
<rect x="350.8" y="521.6" width="146.7" height="3.8999999999999773" fill="#fff" stroke="#2a2a2a" stroke-width="1.4"/>
<rect x="350.8" y="645" width="146.7" height="3.7999999999999545" fill="#fff" stroke="#2a2a2a" stroke-width="1.4"/>
<rect x="492.6" y="698.6" width="5.199999999999989" height="96.39999999999998" fill="#b4b4b4" stroke="#2a2a2a" stroke-width="1.4"/>
<line x1="495.20000000000005" y1="701.6" x2="495.20000000000005" y2="792" stroke="#fff" stroke-width="1.6" stroke-dasharray="9 7"/>
<rect x="500.9" y="673" width="3.2" height="48.5" rx="1" fill="#fff" stroke="#2a2a2a" stroke-width="1.2"/>
<rect x="350.8" y="790.8" width="146.7" height="4.2000000000000455" fill="#fff" stroke="#2a2a2a" stroke-width="1.4"/>
<rect x="381.5" y="790.1999999999999" width="30.5" height="5.400000000000046" fill="#fff"/>
<rect x="381.5" y="790.8" width="3" height="4.2000000000000455" fill="#fff" stroke="#2a2a2a" stroke-width="1"/>
<rect x="409" y="790.8" width="3" height="4.2000000000000455" fill="#fff" stroke="#2a2a2a" stroke-width="1"/>
<rect x="385.5" y="791.3" width="22.5" height="3.2000000000000455" fill="#777" stroke="#2a2a2a" stroke-width="1"/>
<rect x="460.5" y="342.6" width="73.5" height="4" rx="2" fill="#fff" stroke="#2a2a2a" stroke-width="1.3"/>
<rect x="460.5" y="798.4" width="73.5" height="4" rx="2" fill="#fff" stroke="#2a2a2a" stroke-width="1.3"/>
<rect x="642" y="350" width="5" height="96.5" fill="#b4b4b4" stroke="#2a2a2a" stroke-width="1.4"/>
<line x1="644.5" y1="353" x2="644.5" y2="443.5" stroke="#fff" stroke-width="1.6" stroke-dasharray="9 7"/>
<rect x="642" y="497" width="5" height="96" fill="#b4b4b4" stroke="#2a2a2a" stroke-width="1.4"/>
<line x1="644.5" y1="500" x2="644.5" y2="590" stroke="#fff" stroke-width="1.6" stroke-dasharray="9 7"/>
<rect x="642" y="645" width="5" height="95.5" fill="#b4b4b4" stroke="#2a2a2a" stroke-width="1.4"/>
<line x1="644.5" y1="648" x2="644.5" y2="737.5" stroke="#fff" stroke-width="1.6" stroke-dasharray="9 7"/>
<rect x="635.9" y="422.3" width="3.2" height="48.099999999999966" rx="1" fill="#fff" stroke="#2a2a2a" stroke-width="1.2"/>
<rect x="636.1" y="569.4" width="3.2" height="49.30000000000007" rx="1" fill="#fff" stroke="#2a2a2a" stroke-width="1.2"/>
<rect x="635.6" y="716.6" width="3.2" height="48.39999999999998" rx="1" fill="#fff" stroke="#2a2a2a" stroke-width="1.2"/>
<rect x="642" y="350" width="147.5" height="4.399999999999977" fill="#fff" stroke="#2a2a2a" stroke-width="1.4"/>
<rect x="727" y="349.4" width="32.799999999999955" height="5.599999999999977" fill="#fff"/>
<rect x="727" y="350" width="3" height="4.399999999999977" fill="#fff" stroke="#2a2a2a" stroke-width="1"/>
<rect x="756.8" y="350" width="3" height="4.399999999999977" fill="#fff" stroke="#2a2a2a" stroke-width="1"/>
<rect x="731" y="350.5" width="24.799999999999955" height="3.3999999999999773" fill="#777" stroke="#2a2a2a" stroke-width="1"/>
<rect x="642" y="495" width="147.5" height="4.300000000000011" fill="#fff" stroke="#2a2a2a" stroke-width="1.2"/>
<line x1="646" y1="497.15" x2="785.5" y2="497.15" stroke="#9a9a9a" stroke-width="1" stroke-dasharray="14 6"/>
<rect x="642" y="643.6" width="147.5" height="4.0" fill="#fff" stroke="#2a2a2a" stroke-width="1.4"/>
<rect x="642" y="790.7" width="147.5" height="4.099999999999909" fill="#fff" stroke="#2a2a2a" stroke-width="1.4"/>
<rect x="728" y="790.1" width="31.5" height="5.299999999999909" fill="#fff"/>
<rect x="728" y="790.7" width="3" height="4.099999999999909" fill="#fff" stroke="#2a2a2a" stroke-width="1"/>
<rect x="756.5" y="790.7" width="3" height="4.099999999999909" fill="#fff" stroke="#2a2a2a" stroke-width="1"/>
<rect x="732" y="791.2" width="23.5" height="3.099999999999909" fill="#777" stroke="#2a2a2a" stroke-width="1"/>
<rect x="606" y="342.4" width="73" height="4" rx="2" fill="#fff" stroke="#2a2a2a" stroke-width="1.3"/>
<rect x="606.4" y="798.2" width="72.70000000000005" height="4" rx="2" fill="#fff" stroke="#2a2a2a" stroke-width="1.3"/>
<rect x="785.2" y="350" width="4.399999999999977" height="47.5" fill="#fff" stroke="#2a2a2a" stroke-width="1.4"/>
<rect x="785.2" y="448" width="4.399999999999977" height="97.5" fill="#fff" stroke="#2a2a2a" stroke-width="1.4"/>
<rect x="785.2" y="597" width="4.399999999999977" height="97.5" fill="#fff" stroke="#2a2a2a" stroke-width="1.4"/>
<rect x="785.2" y="745" width="4.399999999999977" height="50" fill="#fff" stroke="#2a2a2a" stroke-width="1.4"/>
<polygon points="787.7934164899328,401.05078838651457 819.4934164899329,437.45078838651455 821.9065835100672,435.3492116134854 790.2065835100672,398.94921161348543" fill="#fff" stroke="#2a2a2a" stroke-width="1.2"/>
<path d="M820.7 436.4A48.268519761848935 48.268519761848935 0 0 1 789 447.7" fill="none" stroke="#2a2a2a" stroke-width="1.3"/>
<polygon points="787.7842720890153,548.040195004051 819.7842720890153,585.440195004051 822.2157279109847,583.3598049959489 790.2157279109847,545.959804995949" fill="#fff" stroke="#2a2a2a" stroke-width="1.2"/>
<path d="M821 584.4A49.22154000028848 49.22154000028848 0 0 1 789 597" fill="none" stroke="#2a2a2a" stroke-width="1.3"/>
<polygon points="787.787480861786,697.0439335895853 819.987480861786,734.4439335895853 822.4125191382141,732.3560664104147 790.212519138214,694.9560664104147" fill="#fff" stroke="#2a2a2a" stroke-width="1.2"/>
<path d="M821.2 733.4A49.3517983461596 49.3517983461596 0 0 1 789 744.7" fill="none" stroke="#2a2a2a" stroke-width="1.3"/>
<polygon points="351.32741536956377,695.9114021475013 317.6274153695638,732.2114021475013 319.97258463043624,734.3885978524986 353.67258463043623,698.0885978524987" fill="#fff" stroke="#2a2a2a" stroke-width="1.2"/>
<path d="M318.8 733.3A49.5316060712753 49.5316060712753 0 0 0 352.5 746.2" fill="none" stroke="#2a2a2a" stroke-width="1.3"/>
<circle cx="352.6" cy="524" r="12.4" fill="none" stroke="#6060dd" stroke-width="1.2"/>
<circle cx="495.5" cy="523.5" r="12.4" fill="none" stroke="#6060dd" stroke-width="1.2"/>
<circle cx="352.5" cy="647" r="12.4" fill="none" stroke="#6060dd" stroke-width="1.2"/>
<circle cx="495" cy="646" r="12.4" fill="none" stroke="#6060dd" stroke-width="1.2"/>
<circle cx="645.5" cy="497" r="12.4" fill="none" stroke="#6060dd" stroke-width="1.2"/>
<circle cx="788.5" cy="497" r="12.4" fill="none" stroke="#6060dd" stroke-width="1.2"/>
<circle cx="645" cy="645.5" r="12.4" fill="none" stroke="#6060dd" stroke-width="1.2"/>
<circle cx="788.5" cy="645.5" r="12.4" fill="none" stroke="#6060dd" stroke-width="1.2"/>
<circle cx="351.5" cy="352.3" r="9.7" fill="none" stroke="#c650d6" stroke-width="1.2"/>
<circle cx="496.5" cy="352.3" r="9.7" fill="none" stroke="#c650d6" stroke-width="1.2"/>
<circle cx="496" cy="394.7" r="9.7" fill="none" stroke="#c650d6" stroke-width="1.2"/>
<circle cx="352.7" cy="449.8" r="9.7" fill="none" stroke="#c650d6" stroke-width="1.2"/>
<circle cx="644.5" cy="352" r="9.7" fill="none" stroke="#c650d6" stroke-width="1.2"/>
<circle cx="788.5" cy="352" r="9.7" fill="none" stroke="#c650d6" stroke-width="1.2"/>
<circle cx="352.5" cy="793" r="9.7" fill="none" stroke="#c650d6" stroke-width="1.2"/>
<circle cx="496" cy="793" r="9.7" fill="none" stroke="#c650d6" stroke-width="1.2"/>
<circle cx="644.5" cy="793" r="9.7" fill="none" stroke="#c650d6" stroke-width="1.2"/>
<circle cx="788.5" cy="793" r="9.7" fill="none" stroke="#c650d6" stroke-width="1.2"/>
<rect x="351.0" y="350.5" width="4" height="4" fill="#d83a2a"/>
<rect x="493.5" y="350.5" width="4" height="4" fill="#d83a2a"/>
<rect x="493.5" y="393.0" width="4" height="4" fill="#d83a2a"/>
<rect x="493.5" y="414.0" width="4" height="4" fill="#d83a2a"/>
<rect x="493.5" y="455.0" width="4" height="4" fill="#d83a2a"/>
<rect x="351.0" y="447.8" width="4" height="4" fill="#d83a2a"/>
<rect x="351.0" y="521.5" width="4" height="4" fill="#d83a2a"/>
<rect x="493.5" y="521.5" width="4" height="4" fill="#d83a2a"/>
<rect x="351.0" y="645.0" width="4" height="4" fill="#d83a2a"/>
<rect x="493.5" y="645.0" width="4" height="4" fill="#d83a2a"/>
<rect x="351.0" y="693.0" width="4" height="4" fill="#d83a2a"/>
<rect x="351.0" y="746.0" width="4" height="4" fill="#d83a2a"/>
<rect x="351.0" y="791.0" width="4" height="4" fill="#d83a2a"/>
<rect x="493.5" y="698.0" width="4" height="4" fill="#d83a2a"/>
<rect x="493.5" y="791.0" width="4" height="4" fill="#d83a2a"/>
<rect x="642.5" y="350.5" width="4" height="4" fill="#d83a2a"/>
<rect x="642.5" y="442.5" width="4" height="4" fill="#d83a2a"/>
<rect x="642.5" y="495.0" width="4" height="4" fill="#d83a2a"/>
<rect x="642.5" y="643.5" width="4" height="4" fill="#d83a2a"/>
<rect x="642.5" y="736.5" width="4" height="4" fill="#d83a2a"/>
<rect x="642.5" y="791.0" width="4" height="4" fill="#d83a2a"/>
<rect x="785.5" y="350.5" width="4" height="4" fill="#d83a2a"/>
<rect x="785.5" y="395.0" width="4" height="4" fill="#d83a2a"/>
<rect x="785.5" y="447.0" width="4" height="4" fill="#d83a2a"/>
<rect x="785.5" y="495.0" width="4" height="4" fill="#d83a2a"/>
<rect x="785.5" y="544.0" width="4" height="4" fill="#d83a2a"/>
<rect x="785.5" y="596.0" width="4" height="4" fill="#d83a2a"/>
<rect x="785.5" y="643.5" width="4" height="4" fill="#d83a2a"/>
<rect x="785.5" y="692.0" width="4" height="4" fill="#d83a2a"/>
<rect x="785.5" y="744.0" width="4" height="4" fill="#d83a2a"/>
<rect x="785.5" y="791.0" width="4" height="4" fill="#d83a2a"/>
<circle cx="396" cy="334" r="13" fill="#fff" stroke="#c93434" stroke-width="1.7"/>
<text x="396" y="338.7" fill="#c93434" stroke="#c93434" stroke-width="0.55" font-size="13.2" text-anchor="middle">W1</text>
<circle cx="744" cy="333.5" r="13" fill="#fff" stroke="#c93434" stroke-width="1.7"/>
<text x="744" y="338.2" fill="#c93434" stroke="#c93434" stroke-width="0.55" font-size="13.2" text-anchor="middle">W1</text>
<circle cx="333.5" cy="585" r="13" fill="#fff" stroke="#c93434" stroke-width="1.7"/>
<text x="333.5" y="589.7" fill="#c93434" stroke="#c93434" stroke-width="0.55" font-size="13.2" text-anchor="middle">W1</text>
<circle cx="396.7" cy="811" r="13" fill="#fff" stroke="#c93434" stroke-width="1.7"/>
<text x="396.7" y="815.7" fill="#c93434" stroke="#c93434" stroke-width="0.55" font-size="13.2" text-anchor="middle">W1</text>
<circle cx="744.6" cy="811.2" r="13" fill="#fff" stroke="#c93434" stroke-width="1.7"/>
<text x="744.6" y="815.9000000000001" fill="#c93434" stroke="#c93434" stroke-width="0.55" font-size="13.2" text-anchor="middle">W1</text>
<circle cx="569.7" cy="362.2" r="12.2" fill="#fff" stroke="#c93434" stroke-width="1.7"/>
<text x="569.7" y="366.9" fill="#c93434" stroke="#c93434" stroke-width="0.55" font-size="13.2" text-anchor="middle">D1</text>
<circle cx="570.6" cy="781.5" r="12.2" fill="#fff" stroke="#c93434" stroke-width="1.7"/>
<text x="570.6" y="786.2" fill="#c93434" stroke="#c93434" stroke-width="0.55" font-size="13.2" text-anchor="middle">D1</text>
<circle cx="489.4" cy="439.6" r="12.5" fill="#fff" stroke="#c93434" stroke-width="1.7"/>
<text x="489.4" y="444.3" fill="#c93434" stroke="#c93434" stroke-width="0.55" font-size="13.2" text-anchor="middle">D2</text>
<circle cx="788.3" cy="429.2" r="12.7" fill="#fff" stroke="#c93434" stroke-width="1.7"/>
<text x="788.3" y="433.9" fill="#c93434" stroke="#c93434" stroke-width="0.55" font-size="13.2" text-anchor="middle">DD</text>
<circle cx="789.5" cy="578" r="12.7" fill="#fff" stroke="#c93434" stroke-width="1.7"/>
<text x="789.5" y="582.7" fill="#c93434" stroke="#c93434" stroke-width="0.55" font-size="13.2" text-anchor="middle">DD</text>
<circle cx="788.2" cy="726.7" r="12.7" fill="#fff" stroke="#c93434" stroke-width="1.7"/>
<text x="788.2" y="731.4000000000001" fill="#c93434" stroke="#c93434" stroke-width="0.55" font-size="13.2" text-anchor="middle">DD</text>
<circle cx="352.3" cy="727.4" r="12.7" fill="#fff" stroke="#c93434" stroke-width="1.7"/>
<text x="352.3" y="732.1" fill="#c93434" stroke="#c93434" stroke-width="0.55" font-size="13.2" text-anchor="middle">DD</text>
<ellipse cx="622.8" cy="447" rx="10.6" ry="19" fill="#fff" stroke="#c93434" stroke-width="1.6"/>
<text x="622.8" y="451.7" fill="#c93434" font-size="13" text-anchor="middle" stroke="#c93434" stroke-width="0.5" transform="rotate(90 622.8 447)">SSD</text>
<ellipse cx="622.7" cy="594.6" rx="10.6" ry="19" fill="#fff" stroke="#c93434" stroke-width="1.6"/>
<text x="622.7" y="599.3000000000001" fill="#c93434" font-size="13" text-anchor="middle" stroke="#c93434" stroke-width="0.5" transform="rotate(90 622.7 594.6)">SSD</text>
<ellipse cx="622.5" cy="741.3" rx="10.6" ry="19" fill="#fff" stroke="#c93434" stroke-width="1.6"/>
<text x="622.5" y="746.0" fill="#c93434" font-size="13" text-anchor="middle" stroke="#c93434" stroke-width="0.5" transform="rotate(90 622.5 741.3)">SSD</text>
<ellipse cx="517" cy="697.6" rx="10.6" ry="19" fill="#fff" stroke="#c93434" stroke-width="1.6"/>
<text x="517" y="702.3000000000001" fill="#c93434" font-size="13" text-anchor="middle" stroke="#c93434" stroke-width="0.5" transform="rotate(-90 517 697.6)">SSD</text>
<text x="410" y="411.3" fill="#c93434" stroke="#c93434" stroke-width="0.5" font-size="12.7" text-anchor="middle">Stairs</text>
<line x1="435.7" y1="407.4" x2="447" y2="407.4" stroke="#c93434" stroke-width="1.4"/>
<line x1="447" y1="407.4" x2="460" y2="387" stroke="#c93434" stroke-width="1.4"/>
<polygon points="460,387 458.0620155528813,395.2513160333807 453.33941864079003,392.2418180011657" fill="#c93434"/>
<text x="425" y="425.5" fill="#c93434" stroke="#c93434" stroke-width="0.5" font-size="12.7" text-anchor="middle">Tack Room</text>
<text x="425" y="441" fill="#c93434" stroke="#c93434" stroke-width="0.5" font-size="12.7" text-anchor="middle">12'x14'</text>
<text x="425" y="456" fill="#c93434" stroke="#c93434" stroke-width="0.5" font-size="12.7" text-anchor="middle">(w/ Floor)</text>
<text x="265.6" y="570.1" fill="#c93434" stroke="#c93434" stroke-width="0.5" font-size="12.7" text-anchor="middle">Lean-To</text>
<text x="265.6" y="585" fill="#c93434" stroke="#c93434" stroke-width="0.5" font-size="12.7" text-anchor="middle">10'x36'</text>
<text x="423.6" y="582" fill="#c93434" stroke="#c93434" stroke-width="0.5" font-size="12.7" text-anchor="middle">Wash Stall</text>
<text x="423.6" y="597.7" fill="#c93434" stroke="#c93434" stroke-width="0.5" font-size="12.7" text-anchor="middle">12'x10'</text>
<text x="392.2" y="620.2" fill="#c93434" stroke="#c93434" stroke-width="0.5" font-size="12.7" text-anchor="start">24" Dia. x 36" Deep</text>
<text x="447.2" y="634.3" fill="#c93434" stroke="#c93434" stroke-width="0.5" font-size="12.7" text-anchor="middle">Piers</text>
<line x1="383" y1="614.6" x2="371" y2="614.6" stroke="#c93434" stroke-width="1.4"/>
<line x1="371" y1="614.6" x2="362.3" y2="635.9" stroke="#c93434" stroke-width="1.4"/>
<polygon points="362.3,635.9 362.73288802654105,627.435213649685 367.9171133082496,629.5527141168618" fill="#c93434"/>
<text x="570.5" y="569" fill="#c93434" stroke="#c93434" stroke-width="0.5" font-size="12.7" text-anchor="middle">Aisle</text>
<text x="570.5" y="584" fill="#c93434" stroke="#c93434" stroke-width="0.5" font-size="12.7" text-anchor="middle">12'x36'</text>
<text x="425.5" y="717.6" fill="#c93434" stroke="#c93434" stroke-width="0.5" font-size="12.7" text-anchor="middle">Stall</text>
<text x="425.5" y="734" fill="#c93434" stroke="#c93434" stroke-width="0.5" font-size="12.7" text-anchor="middle">12'x12'</text>
<text x="716.8" y="419.4" fill="#c93434" stroke="#c93434" stroke-width="0.5" font-size="12.7" text-anchor="middle">Stall</text>
<text x="716.8" y="435" fill="#c93434" stroke="#c93434" stroke-width="0.5" font-size="12.7" text-anchor="middle">12'x12'</text>
<text x="716.8" y="568.5" fill="#c93434" stroke="#c93434" stroke-width="0.5" font-size="12.7" text-anchor="middle">Stall</text>
<text x="716.8" y="584" fill="#c93434" stroke="#c93434" stroke-width="0.5" font-size="12.7" text-anchor="middle">12'x12'</text>
<text x="716.8" y="717" fill="#c93434" stroke="#c93434" stroke-width="0.5" font-size="12.7" text-anchor="middle">Stall</text>
<text x="716.8" y="732.3" fill="#c93434" stroke="#c93434" stroke-width="0.5" font-size="12.7" text-anchor="middle">12'x12'</text>
<text x="715.7" y="660.4" fill="#c93434" stroke="#c93434" stroke-width="0.5" font-size="12.7" text-anchor="middle">Removable Pariition</text>
<text x="850.4" y="569.2" fill="#c93434" stroke="#c93434" stroke-width="0.5" font-size="12.7" text-anchor="middle">Lean-To</text>
<text x="850.4" y="584.4" fill="#c93434" stroke="#c93434" stroke-width="0.5" font-size="12.7" text-anchor="middle">10'x36"</text>
<text x="820" y="673.4" fill="#c93434" stroke="#c93434" stroke-width="0.5" font-size="12.7" text-anchor="start">4x4 Post</text>
<line x1="812" y1="668.2" x2="799.6" y2="668.2" stroke="#c93434" stroke-width="1.4"/>
<line x1="799.6" y1="668.2" x2="790" y2="690.1" stroke="#c93434" stroke-width="1.4"/>
<polygon points="790,690.1 790.6473814842002,681.648911477572 795.7762487466239,683.8971820583604" fill="#c93434"/>
<text x="825.4" y="770.1" fill="#c93434" stroke="#c93434" stroke-width="0.5" font-size="12.7" text-anchor="start">6x6 Post</text>
<line x1="882.8" y1="765.9" x2="894" y2="765.9" stroke="#c93434" stroke-width="1.4"/>
<line x1="894" y1="765.9" x2="902.8" y2="785.2" stroke="#c93434" stroke-width="1.4"/>
<polygon points="902.8,785.2 896.9333858333174,779.0825791203091 902.0287222133805,776.7593169366534" fill="#c93434"/>
<text x="944" y="327" fill="#c93434" stroke="#c93434" stroke-width="0.5" font-size="12.7" text-anchor="start">24" Dia. x 36"</text>
<text x="951" y="342.2" fill="#c93434" stroke="#c93434" stroke-width="0.5" font-size="12.7" text-anchor="start">Piers - by C</text>
<line x1="935.5" y1="323.9" x2="924.3" y2="323.9" stroke="#c93434" stroke-width="1.4"/>
<line x1="924.3" y1="323.9" x2="913" y2="345" stroke="#c93434" stroke-width="1.4"/>
<polygon points="913,345 914.3085259575311,336.6257681057623 919.2451615623162,339.26955873770885" fill="#c93434"/>
</svg>
</div>
<!-- scrollbar -->
<div class="a" style="left:1016px;top:236px;width:8px;height:652px;background:#ececec"></div>
<svg class="a" style="left:1017px;top:240px" width="7" height="5"><path d="M0.5 4.5H6.5L3.5 0.5Z" fill="#555"/></svg>
<div class="a" style="left:1016.5px;top:248px;width:7.5px;height:19.5px;background:#bcbcbc"></div>
<div class="a" style="left:1016.5px;top:526px;width:7.5px;height:153.5px;background:#b9b9b9"></div>
<svg class="a" style="left:1017px;top:881px" width="7" height="5"><path d="M0.5 0.5H6.5L3.5 4.5Z" fill="#555"/></svg>
<div class="a" style="left:0;top:888.3px;width:1024px;height:1.7px;background:#222"></div>

</body></html>
